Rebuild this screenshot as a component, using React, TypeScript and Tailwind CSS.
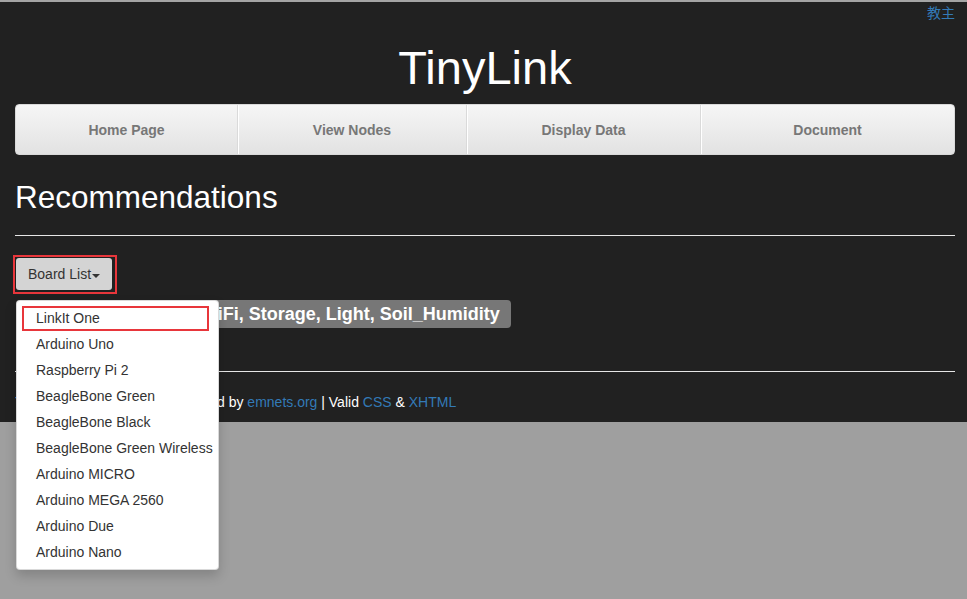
import React from "react";

const boards = [
  "LinkIt One",
  "Arduino Uno",
  "Raspberry Pi 2",
  "BeagleBone Green",
  "BeagleBone Black",
  "BeagleBone Green Wireless",
  "Arduino MICRO",
  "Arduino MEGA 2560",
  "Arduino Due",
  "Arduino Nano",
];

const navItems = [
  { label: "Home Page", w: "w-[221px]" },
  { label: "View Nodes", w: "w-[229px]" },
  { label: "Display Data", w: "w-[234px]" },
  { label: "Document", w: "flex-1" },
];

export default function App() {
  return (
    <div
      className="min-h-[599px] bg-[#9f9f9f]"
      style={{ fontFamily: '"Liberation Sans", Arial, "Noto Sans CJK SC", sans-serif' }}
    >
      <div className="h-[422px] border-t-2 border-[#a4a4a4] bg-[#212121] pl-[15px] pr-[12px]">
        <div className="flex h-[20px] justify-end text-[14px] leading-[20px] text-[#337ab7]">
          <a href="#" style={{ fontFamily: '"Noto Sans CJK SC", "Liberation Sans", sans-serif' }}>
            教主
          </a>
        </div>

        <h1 className="mt-[22px] text-center text-[47px] leading-[47px] font-normal text-white">
          TinyLink
        </h1>

        <nav className="mt-[13px] flex h-[51px] overflow-hidden rounded-[4px] border border-[#d9d9d9] bg-gradient-to-b from-[#f6f6f6] to-[#e2e2e2]">
          {navItems.map((item, i) => (
            <a
              key={item.label}
              href="#"
              className={`${item.w} flex items-center justify-center pt-[2px] text-[14px] font-bold text-[#777777] ${
                i > 0 ? "border-l border-[#dadada] shadow-[inset_1px_0_0_#ffffff]" : ""
              }`}
            >
              {item.label}
            </a>
          ))}
        </nav>

        <h2 className="mt-[27px] text-[31.5px] leading-[31px] font-normal text-white">
          Recommendations
        </h2>

        <hr className="mt-[22px] border-0 border-t border-[#e6e6e6]" />

        <div className="relative mt-[19px]">
          <div className="-ml-[2px] inline-block border-2 border-[#e8363b] pt-px pr-[3px] pb-[2px] pl-px">
            <button className="flex h-[32px] items-center rounded-[3px] bg-[#d4d4d4] pl-[12px] pr-[12px] text-[14px] leading-[20px] text-[#333333]">
              Board List
              <span className="mt-[3px] ml-[1px] inline-block h-0 w-0 border-x-[4px] border-t-[4px] border-x-transparent border-t-[#333333]" />
            </button>
          </div>

          <div className="mt-[6px] flex items-center">
            <span className="w-[175px] text-[24px] leading-[28px] text-white">Requirements:</span>
            <span className="rounded-[4px] bg-[#777777] px-[11px] pt-[5px] pb-[4px] text-[18px] leading-[19px] font-bold text-white whitespace-nowrap">
              WiFi, Storage, Light, Soil_Humidity
            </span>
          </div>

          <ul className="absolute top-[45px] left-px z-10 w-[203px] rounded-[4px] border border-[rgba(0,0,0,0.15)] bg-white py-[4px] shadow-[0_6px_12px_rgba(0,0,0,0.175)]">
            {boards.map((b, i) => (
              <li key={b} className="relative">
                <a
                  href="#"
                  className="block h-[26px] whitespace-nowrap pl-[19px] text-[14px] leading-[26px] text-[#333333]"
                >
                  {b}
                </a>
                {i === 0 && (
                  <span className="pointer-events-none absolute top-[1px] left-[5px] h-[25px] w-[187px] border-2 border-[#e8363b]" />
                )}
              </li>
            ))}
          </ul>
        </div>

        <hr className="mt-[43px] border-0 border-t border-[#e6e6e6]" />

        <p className="mt-[20px] text-[14px] leading-[20px] whitespace-nowrap text-white">
          <span className="inline-block w-[202px] overflow-hidden align-bottom">
            <a href="#" className="text-[#337ab7]">TinyLink</a> © 2017-2018. Designe
          </span>
          d by <a href="#" className="text-[#337ab7]">emnets.org</a> | Valid{" "}
          <a href="#" className="text-[#337ab7]">CSS</a> &amp;{" "}
          <a href="#" className="text-[#337ab7]">XHTML</a>
        </p>
      </div>
    </div>
  );
}
